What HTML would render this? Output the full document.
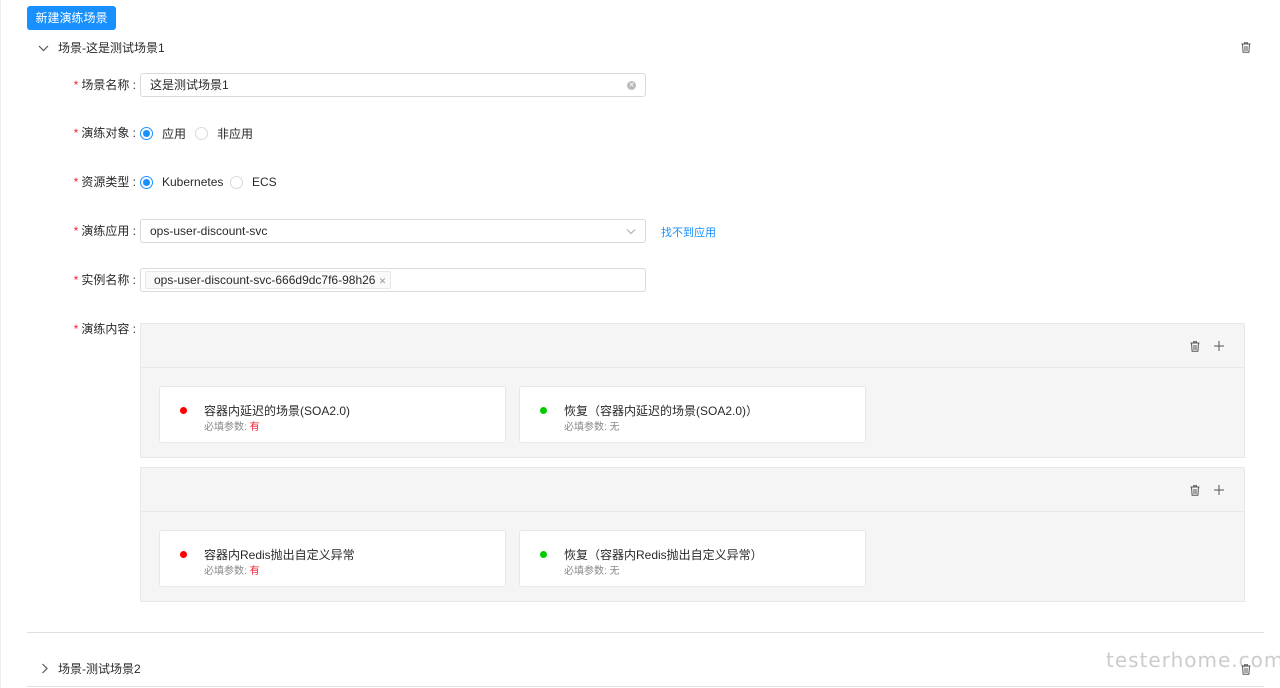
<!DOCTYPE html><html><head><meta charset="utf-8"><style>
*{box-sizing:border-box;margin:0;padding:0}
body{width:1280px;height:688px;overflow:hidden;background:#fff;font-family:"Liberation Sans","Noto Sans CJK SC",sans-serif;font-size:12px;color:rgba(0,0,0,.85);position:relative}
.a{position:absolute}
.btn{left:27px;top:6px;width:89px;height:24px;background:#1890ff;color:#fff;border-radius:3px;text-align:center;line-height:24px}
.lbl{left:60px;width:76px;text-align:right;line-height:16px}
.lbl b{color:#f5222d;font-weight:normal;margin-right:3px}
.inp{left:140px;width:506px;height:24px;border:1px solid #d9d9d9;border-radius:3px;padding-left:9px;line-height:22px}
.radio{width:13px;height:13px;border:1px solid #d9d9d9;border-radius:50%}
.radio.on{border-color:#1890ff}
.radio.on:after{content:"";position:absolute;left:2px;top:2px;width:7px;height:7px;border-radius:50%;background:#1890ff}
.box{left:140px;width:1105px;height:135px;background:#f5f5f5;border:1px solid #e8e8e8}
.box .hd{height:44px;border-bottom:1px solid #e8e8e8}
.card{background:#fff;border:1px solid #e8e8e8;border-radius:3px;height:57px;width:347px;top:62px}
.dot{width:7px;height:7px;border-radius:50%;left:20px;top:20px}
.t1{left:44px;top:16px;font-size:12px;line-height:16px}
.t2{left:44px;top:34px;font-size:10px;color:#888;line-height:14px}
</style></head><body>
<div class="a" style="left:0;top:0;width:1px;height:688px;background:#eee"></div>
<div class="a btn">新建演练场景</div>
<svg class="a" style="left:38px;top:43px" width="11" height="11" viewBox="0 0 11 11"><path d="M1 3l4.5 4.5L10 3" fill="none" stroke="#555" stroke-width="1.2"/></svg>
<div class="a" style="left:58px;top:40px;line-height:16px">场景-这是测试场景1</div>
<svg class="a" style="left:1241px;top:42px" width="10" height="11" viewBox="0 0 10 11"><path d="M0.5 2h9M3.5 2V.8h3V2M1.5 2l.6 8.3h5.8L8.5 2M4 4v5M6 4v5" fill="none" stroke="#555"/></svg>

<div class="a lbl" style="top:77px"><b>*</b>场景名称 :</div>
<div class="a inp" style="top:73px">这是测试场景1<span class="a" style="right:9px;top:7px;width:9px;height:9px;border-radius:50%;background:#bbb;color:#fff;font-size:7px;line-height:9px;text-align:center">✕</span></div>

<div class="a lbl" style="top:125px"><b>*</b>演练对象 :</div>
<div class="a radio on" style="left:140px;top:127px"></div><div class="a" style="left:162px;top:125px">应用</div>
<div class="a radio" style="left:195px;top:127px"></div><div class="a" style="left:217px;top:125px">非应用</div>

<div class="a lbl" style="top:174px"><b>*</b>资源类型 :</div>
<div class="a radio on" style="left:140px;top:176px"></div><div class="a" style="left:162px;top:175px">Kubernetes</div>
<div class="a radio" style="left:230px;top:176px"></div><div class="a" style="left:252px;top:175px">ECS</div>

<div class="a lbl" style="top:223px"><b>*</b>演练应用 :</div>
<div class="a inp" style="top:219px">ops-user-discount-svc<svg class="a" style="right:9px;top:8px" width="10" height="7" viewBox="0 0 10 7"><path d="M1 1.5l4 4 4-4" fill="none" stroke="#aaa"/></svg></div>
<div class="a" style="left:661px;top:224px;color:#1890ff;font-size:11px">找不到应用</div>

<div class="a lbl" style="top:272px"><b>*</b>实例名称 :</div>
<div class="a inp" style="top:268px;padding-left:4px"><span style="display:inline-block;margin-top:2px;height:18px;line-height:16px;background:#fafafa;border:1px solid #e8e8e8;border-radius:2px;padding:0 4px 0 8px">ops-user-discount-svc-666d9dc7f6-98h26 <span style="color:#999;font-size:9px">✕</span></span></div>

<div class="a lbl" style="top:321px"><b>*</b>演练内容 :</div>

<div class="a box" style="top:323px"><div class="hd"></div>
<svg class="a" style="left:1049px;top:17px" width="10" height="11" viewBox="0 0 10 11"><path d="M0.5 2h9M3.5 2V.8h3V2M1.5 2l.6 8.3h5.8L8.5 2M4 4v5M6 4v5" fill="none" stroke="#555"/></svg>
<svg class="a" style="left:1073px;top:17px" width="10" height="10" viewBox="0 0 10 10"><path d="M5 0v10M0 5h10" stroke="#555"/></svg>
<div class="a card" style="left:18px"><div class="a dot" style="background:#f00"></div><div class="a t1">容器内延迟的场景(SOA2.0)</div><div class="a t2">必填参数: <span style="color:#f5222d">有</span></div></div>
<div class="a card" style="left:378px"><div class="a dot" style="background:#0c0"></div><div class="a t1">恢复（容器内延迟的场景(SOA2.0)）</div><div class="a t2">必填参数: 无</div></div>
</div>

<div class="a box" style="top:467px"><div class="hd"></div>
<svg class="a" style="left:1049px;top:17px" width="10" height="11" viewBox="0 0 10 11"><path d="M0.5 2h9M3.5 2V.8h3V2M1.5 2l.6 8.3h5.8L8.5 2M4 4v5M6 4v5" fill="none" stroke="#555"/></svg>
<svg class="a" style="left:1073px;top:17px" width="10" height="10" viewBox="0 0 10 10"><path d="M5 0v10M0 5h10" stroke="#555"/></svg>
<div class="a card" style="left:18px"><div class="a dot" style="background:#f00"></div><div class="a t1">容器内Redis抛出自定义异常</div><div class="a t2">必填参数: <span style="color:#f5222d">有</span></div></div>
<div class="a card" style="left:378px"><div class="a dot" style="background:#0c0"></div><div class="a t1">恢复（容器内Redis抛出自定义异常）</div><div class="a t2">必填参数: 无</div></div>
</div>

<div class="a" style="left:27px;top:632px;width:1237px;height:1px;background:#e0e0e0"></div>
<svg class="a" style="left:40px;top:663px" width="9" height="11" viewBox="0 0 9 11"><path d="M2.5 1l4.5 4.5L2.5 10" fill="none" stroke="#555" stroke-width="1.2"/></svg>
<div class="a" style="left:58px;top:661px;line-height:16px">场景-测试场景2</div>
<div class="a" style="left:1106px;top:648px;font-family:'DejaVu Sans';font-size:20px;color:#ccc;letter-spacing:1px;font-weight:normal">testerhome.com</div>
<svg class="a" style="left:1241px;top:664px" width="10" height="11" viewBox="0 0 10 11"><path d="M0.5 2h9M3.5 2V.8h3V2M1.5 2l.6 8.3h5.8L8.5 2M4 4v5M6 4v5" fill="none" stroke="#555"/></svg>
<div class="a" style="left:27px;top:686px;width:1237px;height:1px;background:#e0e0e0"></div>
</body></html>
